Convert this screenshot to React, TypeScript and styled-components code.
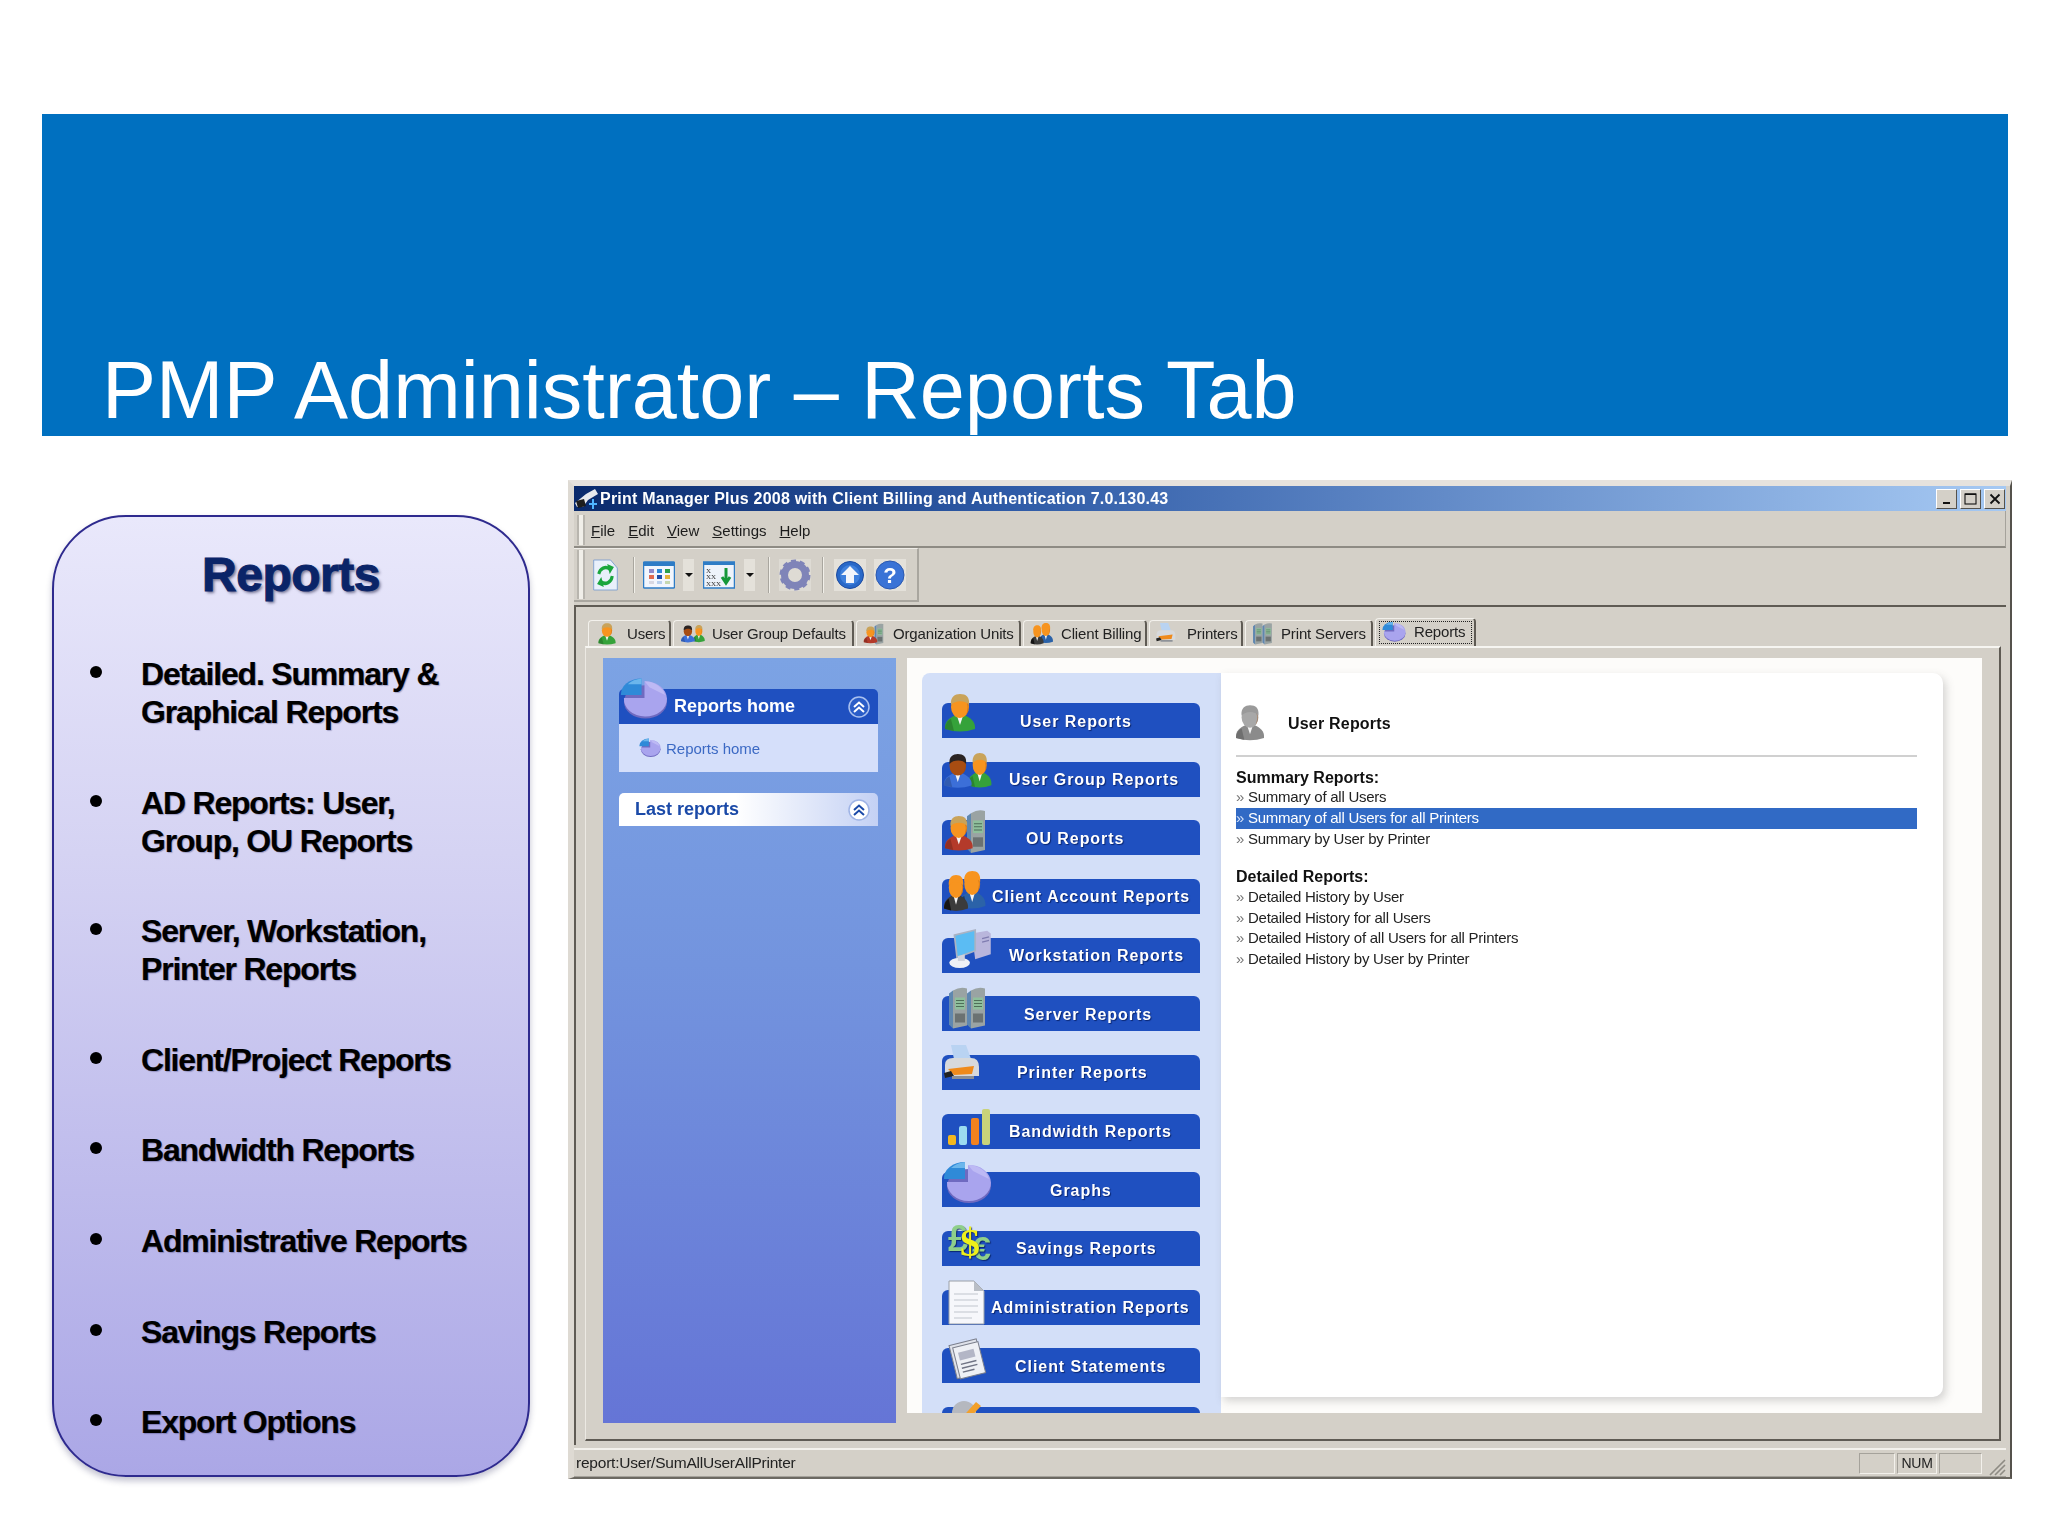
import React from "react";
import styled, { createGlobalStyle } from "styled-components";

const Global = createGlobalStyle`
  html, body { margin: 0; padding: 0; background: #fff; }
  #root { width: 2048px; height: 1536px; overflow: hidden; }
  * { box-sizing: border-box; }
`;

const SANS = `"Liberation Sans", Arial, sans-serif`;

const Page = styled.div`
  width: 2048px;
  height: 1536px;
  background: #fff;
  padding-top: 114px;
  font-family: ${SANS};
`;
const Banner = styled.header`
  margin-left: 42px;
  width: 1966px;
  height: 322px;
  background: #0070c0;
  display: flex;
  align-items: flex-end;
  padding: 0 0 0 60px;
`;
const Title = styled.h1`
  margin: 0;
  font-weight: 400;
  font-size: 81px;
  line-height: 92px;
  color: #fff;
  white-space: nowrap;
`;
const Main = styled.main`
  display: flex;
  align-items: flex-start;
  padding-left: 52px;
  padding-top: 44px;
`;
const Panel = styled.aside`
  margin-top: 35px;
  width: 478px;
  height: 962px;
  margin-right: 38px;
  border: 2px solid #2e2a8e;
  border-radius: 74px;
  background: linear-gradient(180deg, #e9e8fb 0%, #d5d3f3 35%, #aba7e6 100%);
  box-shadow: 0 4px 6px rgba(40, 40, 90, 0.28);
  padding-top: 30px;
`;
const PanelTitle = styled.h2`
  margin: 0 0 52px;
  text-align: center;
  font-size: 48px;
  line-height: 56px;
  letter-spacing: -0.5px;
  font-weight: 700;
  color: #0a2468;
  -webkit-text-stroke: 1px #0a2468;
  text-shadow: 2px 2px 3px rgba(20, 20, 60, 0.55);
`;
const BulletList = styled.ul`
  list-style: none;
  margin: 0;
  padding: 0 0 0 36px;
  display: flex;
  flex-direction: column;
  gap: 52.6px;
`;
const Bullet = styled.li`
  display: flex;
  align-items: flex-start;
  font-size: 32px;
  line-height: 38px;
  font-weight: 700;
  letter-spacing: -1.2px;
  color: #000;
  -webkit-text-stroke: 0.2px #000;
  text-shadow: 1px 1px 1px rgba(30, 30, 90, 0.3);
  &::before {
    content: "";
    flex: none;
    width: 12px;
    height: 12px;
    border-radius: 50%;
    background: #000;
    margin: 11px 39px 0 0;
  }
`;

const Win = styled.section`
  width: 1444px;
  height: 999px;
  background: #d4d0c8;
  border-top: 6px solid #e6e2dd;
  border-left: 6px solid #dedad3;
  border-right: 2px solid #55524c;
  border-bottom: 2px solid #6c6962;
  padding-right: 4px;
  display: flex;
  flex-direction: column;
  filter: blur(0.4px);
`;
const TitleBar = styled.div`
  height: 25px;
  flex: none;
  background: linear-gradient(90deg, #0a2a6c 0%, #2e5aa6 30%, #a6c9f3 100%);
  display: flex;
  align-items: center;
  color: #fff;
  font-size: 16px;
  font-weight: 700;
  letter-spacing: 0.22px;
  white-space: nowrap;
`;
const TitleIcon = styled.svg`
  width: 26px;
  height: 25px;
  flex: none;
`;
const WinButtons = styled.div`
  margin-left: auto;
  display: flex;
  gap: 3px;
  padding-right: 1px;
`;
const WinBtn = styled.span`
  width: 21px;
  height: 20px;
  background: #d4d0c8;
  border: 1px solid;
  border-color: #fff #55524c #55524c #fff;
  display: flex;
  align-items: center;
  justify-content: center;
`;
const MenuBar = styled.nav`
  height: 37px;
  flex: none;
  display: flex;
  align-items: center;
  gap: 6px;
  padding: 3px 0 0 3px;
  font-size: 15px;
  color: #1c1c1c;
  border-bottom: 2px solid #8e8b84;
  border-right: 1px solid #a5a29b;
`;
const Gripper = styled.span`
  flex: none;
  width: 8px;
  align-self: stretch;
  margin: 1px 0;
  border-left: 2px solid #b8b5ae;
  border-right: 2px solid #b8b5ae;
  background: #f1efe9;
`;
const MenuItems = styled.div`
  display: flex;
  gap: 13px;
`;
const ToolBar = styled.div`
  height: 54px;
  width: 345px;
  flex: none;
  display: flex;
  align-items: center;
  padding-left: 3px;
  border-bottom: 2px solid #a9a69f;
  border-right: 2px solid #a9a69f;
  border-top: 1px solid #efede8;
`;
const ToolSep = styled.span<{ $ml: number; $mr: number }>`
  flex: none;
  width: 2px;
  height: 36px;
  background: #a9a69f;
  border-right: 1px solid #f1efe9;
  margin: 0 ${(p) => p.$mr}px 0 ${(p) => p.$ml}px;
`;
const ToolIcon = styled.svg<{ $ml?: number; $w?: number }>`
  width: ${(p) => p.$w ?? 32}px;
  height: 32px;
  flex: none;
  margin-left: ${(p) => p.$ml ?? 0}px;
`;
const Drop = styled.span<{ $ml: number }>`
  flex: none;
  width: 11px;
  height: 32px;
  margin-left: ${(p) => p.$ml}px;
  background: #e4e1da;
  display: flex;
  align-items: center;
  justify-content: center;
  &::after {
    content: "";
    border-left: 4px solid transparent;
    border-right: 4px solid transparent;
    border-top: 4px solid #111;
  }
`;
const Frame = styled.div`
  margin-top: 3px;
  height: 840px;
  flex: none;
  border-top: 2px solid #5f5b54;
  border-left: 2px solid #5f5b54;
  padding: 13px 5px 0 9px;
  display: flex;
  flex-direction: column;
`;
const TabStrip = styled.div`
  display: flex;
  height: 26px;
  flex: none;
  padding-left: 3px;
  align-items: flex-end;
`;
const Tab = styled.div<{ $w: number; $active?: boolean; $pad: number; $gap: number }>`
  width: ${(p) => p.$w}px;
  height: ${(p) => (p.$active ? 28 : 26)}px;
  flex: none;
  margin-right: 2px;
  display: flex;
  align-items: center;
  padding-left: ${(p) => p.$pad}px;
  padding-bottom: ${(p) => (p.$active ? 2 : 0)}px;
  gap: ${(p) => p.$gap}px;
  font-size: 15px;
  letter-spacing: -0.15px;
  color: #222;
  white-space: nowrap;
  border-top: 1px solid #f3f1ec;
  border-left: 1px solid #f3f1ec;
  border-right: 2px solid #5f5b54;
  border-radius: 4px 4px 0 0;
  position: relative;
  ${(p) =>
    p.$active &&
    `
    &::after {
      content: "";
      position: absolute;
      inset: 2px 2px 2px 3px;
      border: 1.5px dotted #222;
    }
  `}
`;
const TabIcon = styled.svg`
  width: 24px;
  height: 22px;
  flex: none;
`;
const Pane = styled.div`
  height: 795px;
  flex: none;
  border-top: 2px solid #f6f5f1;
  border-left: 1px solid #ece9e3;
  border-right: 2px solid #5f5b54;
  border-bottom: 2px solid #5f5b54;
  padding: 10px 17px 0 17px;
  display: flex;
  align-items: flex-start;
  gap: 11px;
`;
const NavColumn = styled.div`
  width: 293px;
  height: 765px;
  flex: none;
  background: linear-gradient(180deg, #7ca3e4 0%, #7394de 40%, #6575d6 100%);
  padding: 31px 18px 0 16px;
`;
const NavHead = styled.div`
  height: 35px;
  background: #1f50c0;
  border-radius: 5px 5px 0 0;
  display: flex;
  align-items: center;
  color: #fff;
  font-size: 18px;
  font-weight: 700;
  padding-left: 55px;
  position: relative;
`;
const NavPie = styled.svg`
  position: absolute;
  left: 1px;
  top: -11px;
  width: 48px;
  height: 42px;
`;
const Chevron = styled.svg`
  margin-left: auto;
  margin-right: 7px;
  width: 24px;
  height: 24px;
  flex: none;
`;
const NavBody = styled.div`
  height: 48px;
  background: #d5dffa;
  display: flex;
  align-items: center;
  gap: 5px;
  padding-left: 20px;
  color: #3b69c4;
  font-size: 15px;
`;
const NavBodyIcon = styled.svg`
  width: 22px;
  height: 20px;
  flex: none;
`;
const NavLast = styled.div`
  height: 33px;
  margin-top: 21px;
  border-radius: 5px 5px 0 0;
  background: linear-gradient(90deg, #fff 0%, #fff 45%, #c4d1f4 100%);
  display: flex;
  align-items: center;
  color: #1b4aa8;
  font-size: 18px;
  font-weight: 700;
  padding-left: 16px;
`;
const Stage = styled.div`
  width: 1075px;
  height: 755px;
  flex: none;
  background: #fdfcfa;
  padding: 15px 0 0 15px;
  display: flex;
  align-items: flex-start;
  overflow: hidden;
`;
const ReportColumn = styled.div`
  width: 299px;
  height: 745px;
  flex: none;
  background: #d3dff8;
  border-radius: 8px 0 0 0;
  padding: 30px 0 0 20px;
  display: flex;
  flex-direction: column;
  gap: 23.67px;
`;
const ReportButton = styled.div<{ $tx: number }>`
  width: 258px;
  height: 35px;
  flex: none;
  background: #1f50c0;
  border-radius: 6px 6px 0 0;
  position: relative;
  display: flex;
  align-items: center;
  padding: 2px 0 0 ${(p) => p.$tx}px;
  color: #fff;
  font-size: 16px;
  letter-spacing: 0.95px;
  font-weight: 700;
  white-space: nowrap;
  text-shadow: 1px 1px 1px rgba(0, 20, 80, 0.7);
`;
const ReportIcon = styled.svg<{ $x: number; $y: number }>`
  position: absolute;
  left: ${(p) => p.$x}px;
  top: ${(p) => p.$y}px;
  overflow: visible;
`;
const Card = styled.div`
  width: 722px;
  height: 724px;
  flex: none;
  background: #fff;
  border-radius: 0 10px 10px 0;
  box-shadow: 3px 4px 8px rgba(90, 90, 90, 0.25);
  padding: 0 26px 0 15px;
  font-size: 15px;
  color: #222;
`;
const CardHeader = styled.div`
  height: 84px;
  border-bottom: 2px solid #d0d0d0;
  display: flex;
  align-items: flex-start;
  padding-top: 31px;
  gap: 24px;
  font-size: 16px;
  font-weight: 700;
  letter-spacing: 0.2px;
  color: #111;
`;
const CardHeadIcon = styled.svg`
  width: 28px;
  height: 38px;
  flex: none;
`;
const CardHeadLabel = styled.span`
  line-height: 38px;
  margin-top: 1px;
`;
const GroupTitle = styled.div<{ $first?: boolean }>`
  height: 21px;
  line-height: ${(p) => (p.$first ? 23 : 21)}px;
  margin-top: ${(p) => (p.$first ? 9 : 16)}px;
  font-size: 16px;
  font-weight: 700;
  color: #111;
`;
const ReportRow = styled.div<{ $selected?: boolean }>`
  height: 20.9px;
  line-height: 20.9px;
  letter-spacing: -0.25px;
  white-space: nowrap;
  background: ${(p) => (p.$selected ? "#316ac5" : "transparent")};
  color: ${(p) => (p.$selected ? "#fff" : "#222")};
  &::before {
    content: "»";
    display: inline-block;
    width: 12px;
    color: ${(p) => (p.$selected ? "#d5e2fa" : "#777")};
  }
`;
const StatusBar = styled.footer`
  margin-top: 3px;
  flex: 1;
  border-top: 2px solid #f3f1ec;
  display: flex;
  align-items: center;
  padding: 0 0 0 2px;
  font-size: 15.5px;
  letter-spacing: -0.22px;
  color: #222;
  border-bottom: 1px solid #a5a29b;
`;
const StatusCell = styled.span<{ $w: number }>`
  width: ${(p) => p.$w}px;
  height: 21px;
  margin-left: 2px;
  border: 1px solid;
  border-color: #a5a29b #f3f1ec #f3f1ec #a5a29b;
  display: flex;
  align-items: center;
  justify-content: center;
  font-size: 14px;
`;
const StatusGap = styled.span`
  flex: 1;
`;
const Grip = styled.svg`
  width: 20px;
  height: 20px;
  margin: 6px 0 0 4px;
  flex: none;
`;

const Fig: React.FC<{ x?: number; y?: number; s?: number; sy?: number; body: string; hair?: string; skin?: string; dark?: string }> = ({
  x = 0,
  y = 0,
  s = 1,
  sy,
  body,
  hair = "#c9a35a",
  skin = "#f7941f",
  dark,
}) => (
  <g transform={`translate(${x} ${y}) scale(${s} ${sy ?? s})`}>
    <path d="M0 35 C-1 27 6 23 11 21 L19 21 C24 23 31 27 30 35 Q15 40 0 35Z" fill={body} />
    <path d="M0 35 C0 30 3 26 6 25 L9 37Z" fill={dark ?? "rgba(0,0,0,.18)"} />
    <path d="M12 22 L15 31 L18 22Z" fill="#f4f4f4" />
    <ellipse cx="15" cy="13" rx="9" ry="11" fill={skin} />
    <path d="M19 4 C23 8 24 14 21 21 C24 18 25 9 19 4Z" fill="rgba(160,70,0,.5)" />
    <path d="M6 11 C5 3 10 0 15 0 C21 0 25 3 24 11 C21 6 10 6 6 11Z" fill={hair} />
  </g>
);

const Pie: React.FC = () => (
  <>
    <ellipse cx="26" cy="24" rx="22" ry="17" fill="#6f6ac0" />
    <path d="M25 3 A22 18 0 1 1 4 20 L25 20Z" fill="#a9a4ee" />
    <path d="M25 3 A22 18 0 0 1 46 17 L30 9Z" fill="#c6c2f7" opacity=".7" />
    <path d="M22 0 A21 16 0 0 0 1 17 L22 17Z" fill="#2f8ad8" />
    <path d="M22 0 A21 16 0 0 0 8 6 L22 6Z" fill="#6bb6ec" />
  </>
);

const Tower: React.FC<{ x: number }> = ({ x }) => (
  <g transform={`translate(${x} 0)`}>
    <path d="M2 3 Q9 -1 16 1 L16 38 L2 41Z" fill="#9aa3a3" />
    <path d="M-2 6 L2 3 L2 41 L-2 37Z" fill="#5f87b0" />
    <rect x="4" y="10" width="10" height="12" fill="#8fbf9c" />
    <path d="M5 13 H13 M5 16 H13 M5 19 H13" stroke="#4f6f58" strokeWidth="1" />
    <rect x="4" y="26" width="10" height="9" fill="#6b7272" />
  </g>
);

const Doc: React.FC = () => (
  <>
    <path d="M1 1 H26 L36 11 V44 H1Z" fill="#f6f7fb" stroke="#9aa0a8" strokeWidth="1" />
    <path d="M26 1 V11 H36Z" fill="#b9bec6" />
    <path d="M6 14 H30 M6 20 H30 M6 26 H30 M6 32 H30 M6 38 H24" stroke="#d2d6dd" strokeWidth="1.4" />
  </>
);

const icons: Record<string, { w: number; h: number; x: number; y: number; vb: string; el: React.ReactNode }> = {
  user: { w: 30, h: 38, x: 3, y: -9, vb: "0 0 30 38", el: <Fig body="#35a23a" /> },
  group: {
    w: 48,
    h: 36,
    x: 2,
    y: -9,
    vb: "0 0 48 36",
    el: (
      <>
        <Fig x={24} y={0} s={0.78} sy={0.92} body="#35a23a" />
        <Fig x={0} y={1} s={0.92} sy={0.9} body="#3c6fd8" hair="#2a2423" skin="#a84d12" />
      </>
    ),
  },
  ou: {
    w: 42,
    h: 45,
    x: 3,
    y: -11,
    vb: "0 0 42 45",
    el: (
      <>
        <g transform="translate(24 1) scale(1 1.05)">
          <Tower x={0} />
        </g>
        <Fig x={0} y={7} s={0.92} body="#b43a2a" />
      </>
    ),
  },
  client: {
    w: 42,
    h: 41,
    x: 2,
    y: -8,
    vb: "0 0 42 41",
    el: (
      <>
        <Fig x={15} y={0} s={0.88} sy={1} body="#2b62a8" hair="#f7941f" dark="#173a70" />
        <Fig x={0} y={4} s={0.8} sy={0.96} body="#3b3b3b" hair="#f7941f" dark="#151515" />
      </>
    ),
  },
  workstation: {
    w: 44,
    h: 38,
    x: 6,
    y: -8,
    vb: "0 0 48 44",
    el: (
      <>
        <path d="M26 4 L44 1 L48 4 L48 28 L30 34Z" fill="#b9b6dc" />
        <path d="M38 10 L46 8 M38 14 L46 12" stroke="#7f7cb0" strokeWidth="1.4" />
        <path d="M6 6 L30 0 L30 24 L9 32Z" fill="#5bbcf3" stroke="#aab3c4" strokeWidth="2" />
        <ellipse cx="12" cy="38" rx="12" ry="6" fill="#eef0f6" />
        <path d="M10 30 L18 28 L18 36 L10 36Z" fill="#cfd3dd" />
      </>
    ),
  },
  server: {
    w: 38,
    h: 43,
    x: 7,
    y: -9,
    vb: "-2 0 38 42",
    el: (
      <>
        <Tower x={0} />
        <Tower x={18} />
      </>
    ),
  },
  printer: {
    w: 36,
    h: 40,
    x: 2,
    y: -10,
    vb: "0 0 36 40",
    el: (
      <>
        <path d="M7 0 L22 0 L27 14 L10 14Z" fill="#b9d3f2" />
        <path d="M1 20 Q1 13 9 13 L27 13 Q35 13 35 22 L35 31 L1 31Z" fill="#d7d9dc" />
        <path d="M4 24 L30 21 L28 29 L10 30Z" fill="#ef8a1b" />
        <path d="M0 28 L7 26 L10 31 L1 33Z" fill="#222" />
        <rect x="8" y="31" width="22" height="3" fill="#8b8f96" />
      </>
    ),
  },
  bandwidth: {
    w: 44,
    h: 36,
    x: 6,
    y: -5,
    vb: "0 0 44 36",
    el: (
      <>
        <rect x="0" y="26" width="8" height="10" rx="2" fill="#f5b81f" />
        <rect x="11" y="17" width="8" height="19" rx="2" fill="#9bdcf0" />
        <rect x="23" y="9" width="8" height="27" rx="2" fill="#f2821f" />
        <rect x="34" y="0" width="8" height="36" rx="2" fill="#c9d37a" />
      </>
    ),
  },
  graphs: { w: 49, h: 42, x: 1, y: -10, vb: "0 0 49 42", el: <Pie /> },
  savings: {
    w: 46,
    h: 36,
    x: 7,
    y: -4,
    vb: "0 0 46 36",
    el: (
      <text fontWeight="700" fontFamily="Liberation Sans, sans-serif">
        <tspan x="-1" y="24" fontSize="36" fill="#8fcf8a">£</tspan>
        <tspan x="23" y="33" fontSize="34" fill="#8fcf8a">€</tspan>
        <tspan x="11" y="29" fontSize="40" fill="#eef01a" fontFamily="Liberation Serif, serif">$</tspan>
      </text>
    ),
  },
  admin: { w: 37, h: 45, x: 6, y: -10, vb: "0 0 37 45", el: <Doc /> },
  statements: {
    w: 44,
    h: 42,
    x: 4,
    y: -8,
    vb: "0 0 44 42",
    el: (
      <g transform="rotate(-14 20 20)">
        <rect x="7" y="2" width="28" height="34" fill="#dfe2ea" stroke="#7b7f8c" />
        <rect x="10" y="5" width="26" height="32" fill="#eef0f5" stroke="#7b7f8c" />
        <rect x="14" y="11" width="16" height="8" fill="#b3b6c6" />
        <path d="M14 23 H30 M14 27 H30 M14 31 H26" stroke="#6f7384" strokeWidth="1.4" />
      </g>
    ),
  },
  last: {
    w: 34,
    h: 26,
    x: 6,
    y: -7,
    vb: "0 0 34 26",
    el: (
      <>
        <circle cx="16" cy="13" r="12" fill="#b5b8bf" />
        <path d="M10 22 L28 2 L33 6 L16 24Z" fill="#f2a02b" />
      </>
    ),
  },
};

const buttons: { id: string; label: string; tx: number }[] = [
  { id: "user", label: "User Reports", tx: 78 },
  { id: "group", label: "User Group Reports", tx: 67 },
  { id: "ou", label: "OU Reports", tx: 84 },
  { id: "client", label: "Client Account Reports", tx: 50 },
  { id: "workstation", label: "Workstation Reports", tx: 67 },
  { id: "server", label: "Server Reports", tx: 82 },
  { id: "printer", label: "Printer Reports", tx: 75 },
  { id: "bandwidth", label: "Bandwidth Reports", tx: 67 },
  { id: "graphs", label: "Graphs", tx: 108 },
  { id: "savings", label: "Savings Reports", tx: 74 },
  { id: "admin", label: "Administration Reports", tx: 49 },
  { id: "statements", label: "Client Statements", tx: 73 },
  { id: "last", label: "", tx: 0 },
];

const tabs: { label: string; w: number; pad: number; gap: number; icon: React.ReactNode; vb: string; active?: boolean }[] = [
  { label: "Users", w: 83, pad: 6, gap: 8, vb: "-6 0 42 38", icon: <Fig body="#35a23a" /> },
  { label: "User Group Defaults", w: 181, pad: 7, gap: 7, vb: "0 0 48 36", icon: icons.group.el },
  { label: "Organization Units", w: 165, pad: 5, gap: 7, vb: "0 0 42 45", icon: icons.ou.el },
  { label: "Client Billing", w: 124, pad: 6, gap: 7, vb: "0 0 42 41", icon: icons.client.el },
  { label: "Printers", w: 94, pad: 4, gap: 9, vb: "0 0 36 40", icon: icons.printer.el },
  { label: "Print Servers", w: 128, pad: 5, gap: 6, vb: "-2 0 38 42", icon: icons.server.el },
  { label: "Reports", w: 101, pad: 6, gap: 8, vb: "0 0 49 42", icon: <Pie />, active: true },
];

const Dbl: React.FC<{ light?: boolean }> = ({ light }) => (
  <>
    <circle cx="12" cy="12" r="10" fill={light ? "#fff" : "#2a5dc8"} stroke={light ? "#9fb4e6" : "#a9c0ef"} strokeWidth="1.5" />
    <path d="M7 12 L12 7.5 L17 12 M7 17 L12 12.5 L17 17" fill="none" stroke={light ? "#1b4aa8" : "#fff"} strokeWidth="2" />
  </>
);

const bullets = [
  ["Detailed. Summary &", "Graphical Reports"],
  ["AD Reports: User,", "Group, OU Reports"],
  ["Server, Workstation,", "Printer Reports"],
  ["Client/Project Reports"],
  ["Bandwidth Reports"],
  ["Administrative Reports"],
  ["Savings Reports"],
  ["Export Options"],
];

export default function App() {
  return (
    <Page>
      <Global />
      <Banner>
        <Title>PMP Administrator – Reports Tab</Title>
      </Banner>
      <Main>
        <Panel>
          <PanelTitle>Reports</PanelTitle>
          <BulletList>
            {bullets.map((b) => (
              <Bullet key={b[0]}>
                <span>
                  {b[0]}
                  {b[1] && <br />}
                  {b[1]}
                </span>
              </Bullet>
            ))}
          </BulletList>
        </Panel>
        <Win>
          <TitleBar>
            <TitleIcon viewBox="0 0 26 25">
              <path d="M1 17 L12 8 L21 3 L24 8 L14 14 L9 21 L3 21Z" fill="#e7e9ee" />
              <path d="M2 15 L10 13 L12 20 L4 22Z" fill="#1e1e1e" />
              <path d="M19 13 V23 M15 18 H23" stroke="#4fb4ff" strokeWidth="2" />
            </TitleIcon>
            Print Manager Plus 2008 with Client Billing and Authentication 7.0.130.43
            <WinButtons>
              <WinBtn>
                <svg width="12" height="12" viewBox="0 0 12 12"><rect x="2" y="9" width="7" height="2" fill="#111" /></svg>
              </WinBtn>
              <WinBtn>
                <svg width="14" height="14" viewBox="0 0 14 14"><rect x="1" y="2" width="11" height="10" fill="none" stroke="#111" strokeWidth="1.1" /><rect x="1" y="1.5" width="11" height="1.5" fill="#111" /></svg>
              </WinBtn>
              <WinBtn>
                <svg width="12" height="12" viewBox="0 0 12 12"><path d="M1.5 1.5 L10.5 10.5 M10.5 1.5 L1.5 10.5" stroke="#111" strokeWidth="1.8" /></svg>
              </WinBtn>
            </WinButtons>
          </TitleBar>
          <MenuBar>
            <Gripper />
            <MenuItems>
              <span><u>F</u>ile</span>
              <span><u>E</u>dit</span>
              <span><u>V</u>iew</span>
              <span><u>S</u>ettings</span>
              <span><u>H</u>elp</span>
            </MenuItems>
          </MenuBar>
          <ToolBar>
            <Gripper />
            <ToolIcon $ml={7} $w={27} viewBox="0 0 32 32" preserveAspectRatio="none">
              <path d="M2 1 H22 L30 9 V31 H2Z" fill="#e9f0fb" stroke="#7ea0cf" />
              <path d="M8 15 A8.5 8.5 0 0 1 21 10" fill="none" stroke="#1aa63d" strokeWidth="3.6" />
              <path d="M18 5 L26 8 L21 15Z" fill="#1aa63d" />
              <path d="M24 17 A8.5 8.5 0 0 1 11 23" fill="none" stroke="#1aa63d" strokeWidth="3.6" />
              <path d="M14 28 L6 25 L11 18Z" fill="#1aa63d" />
            </ToolIcon>
            <ToolSep $ml={14} $mr={8} />
            <ToolIcon viewBox="0 0 32 32">
              <rect x="0.5" y="3" width="31" height="26" rx="1" fill="#f2f6fd" stroke="#2e7cc6" strokeWidth="1.5" />
              <rect x="0.5" y="3" width="31" height="4" fill="#2e7cc6" />
              <rect x="6" y="10" width="5" height="4" fill="#8f8ac9" /><rect x="14" y="10" width="5" height="4" fill="#2f8ad8" /><rect x="22" y="10" width="5" height="4" fill="#2ba04a" />
              <rect x="6" y="16" width="5" height="4" fill="#e06a4f" /><rect x="14" y="16" width="5" height="4" fill="#1f4fa8" /><rect x="22" y="16" width="5" height="4" fill="#e3b23a" />
              <rect x="6" y="22" width="5" height="3" fill="#d8d8e2" /><rect x="14" y="22" width="5" height="3" fill="#b9d0ee" /><rect x="22" y="22" width="5" height="3" fill="#c6d8b0" />
            </ToolIcon>
            <Drop $ml={8} />
            <ToolIcon $ml={9} viewBox="0 0 32 32">
              <rect x="0.5" y="3" width="31" height="26" fill="#eef3fb" stroke="#2e7cc6" strokeWidth="1.5" />
              <rect x="0.5" y="3" width="31" height="3" fill="#2e7cc6" />
              <text x="3" y="14" fontFamily="Liberation Serif, serif" fontSize="7" fill="#333">X</text>
              <text x="3" y="20" fontFamily="Liberation Serif, serif" fontSize="7" fill="#333">XX</text>
              <text x="3" y="27" fontFamily="Liberation Serif, serif" fontSize="7" fill="#333">XXX</text>
              <path d="M23 9 V22 M19 18 L23 24 L27 18" stroke="#15973a" strokeWidth="3" fill="none" />
            </ToolIcon>
            <Drop $ml={9} />
            <ToolSep $ml={13} $mr={9} />
            <ToolIcon viewBox="0 0 32 32">
              <rect width="32" height="32" fill="#dedbd4" />
              <circle cx="16" cy="16" r="10.5" fill="none" stroke="#7f84b8" strokeWidth="7" />
              <circle cx="16" cy="16" r="14" fill="none" stroke="#7f84b8" strokeWidth="3" strokeDasharray="5 3.8" />
            </ToolIcon>
            <ToolSep $ml={11} $mr={10} />
            <ToolIcon viewBox="0 0 32 32">
              <rect width="32" height="32" fill="#e4e1da" />
              <circle cx="16" cy="16" r="13.5" fill="#2868c8" stroke="#1b4aa0" />
              <circle cx="16" cy="16" r="10" fill="#3f80dc" />
              <path d="M16 7 L25 16 H20 V24 H12 V16 H7Z" fill="#f4f6fb" />
            </ToolIcon>
            <ToolIcon $ml={8} viewBox="0 0 32 32">
              <rect width="32" height="32" fill="#e4e1da" />
              <circle cx="16" cy="16" r="14" fill="#3a73d6" stroke="#2a58b0" />
              <text x="16" y="24" textAnchor="middle" fontFamily="Liberation Sans, sans-serif" fontWeight="700" fontSize="22" fill="#fff">?</text>
            </ToolIcon>
          </ToolBar>
          <Frame>
            <TabStrip>
              {tabs.map((t) => (
                <Tab key={t.label} $w={t.w} $pad={t.pad} $gap={t.gap} $active={t.active}>
                  <TabIcon viewBox={t.vb}>{t.icon}</TabIcon>
                  {t.label}
                </Tab>
              ))}
            </TabStrip>
            <Pane>
              <NavColumn>
                <NavHead>
                  <NavPie viewBox="0 0 49 42"><Pie /></NavPie>
                  Reports home
                  <Chevron viewBox="0 0 24 24"><Dbl /></Chevron>
                </NavHead>
                <NavBody>
                  <NavBodyIcon viewBox="0 0 49 42"><Pie /></NavBodyIcon>
                  Reports home
                </NavBody>
                <NavLast>
                  Last reports
                  <Chevron viewBox="0 0 24 24"><Dbl light /></Chevron>
                </NavLast>
              </NavColumn>
              <Stage>
                <ReportColumn>
                  {buttons.map((b) => {
                    const ic = icons[b.id];
                    return (
                      <ReportButton key={b.id} $tx={b.tx}>
                        <ReportIcon $x={ic.x} $y={ic.y} width={ic.w} height={ic.h} viewBox={ic.vb}>
                          {ic.el}
                        </ReportIcon>
                        {b.label}
                      </ReportButton>
                    );
                  })}
                </ReportColumn>
                <Card>
                  <CardHeader>
                    <CardHeadIcon viewBox="0 0 30 38">
                      <Fig body="#8b8b8b" hair="#9a9a9a" skin="#a8a8a8" dark="#6f6f6f" />
                    </CardHeadIcon>
                    <CardHeadLabel>User Reports</CardHeadLabel>
                  </CardHeader>
                  <GroupTitle $first>Summary Reports:</GroupTitle>
                  <ReportRow>Summary of all Users</ReportRow>
                  <ReportRow $selected>Summary of all Users for all Printers</ReportRow>
                  <ReportRow>Summary by User by Printer</ReportRow>
                  <GroupTitle>Detailed Reports:</GroupTitle>
                  <ReportRow>Detailed History by User</ReportRow>
                  <ReportRow>Detailed History for all Users</ReportRow>
                  <ReportRow>Detailed History of all Users for all Printers</ReportRow>
                  <ReportRow>Detailed History by User by Printer</ReportRow>
                </Card>
              </Stage>
            </Pane>
          </Frame>
          <StatusBar>
            report:User/SumAllUserAllPrinter
            <StatusGap />
            <StatusCell $w={36} />
            <StatusCell $w={40}>NUM</StatusCell>
            <StatusCell $w={43} />
            <Grip viewBox="0 0 20 20">
              <path d="M4 19 L19 4 M9 19 L19 9 M14 19 L19 14" stroke="#8e8b84" strokeWidth="1.6" />
            </Grip>
          </StatusBar>
        </Win>
      </Main>
    </Page>
  );
}
